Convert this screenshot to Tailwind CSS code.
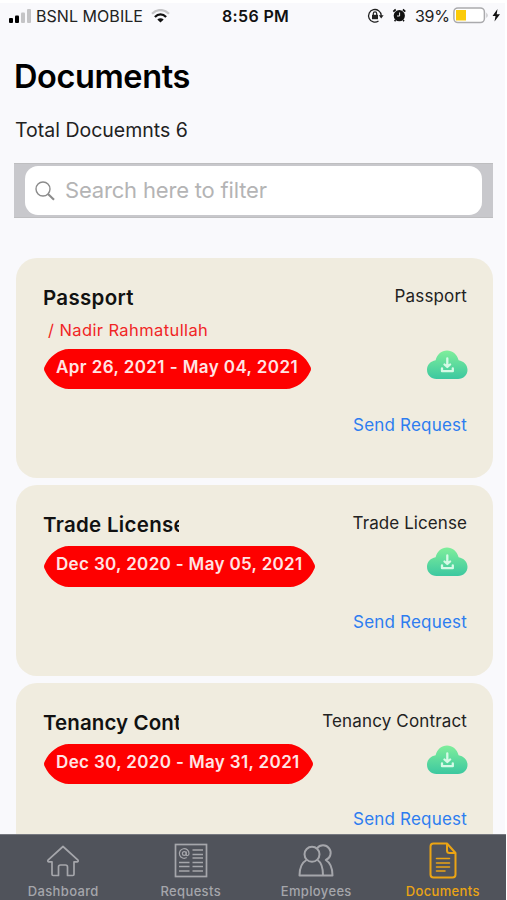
<!DOCTYPE html>
<html lang="en">
<head>
<meta charset="utf-8">
<title>Documents</title>
<script src="https://cdn.jsdelivr.net/npm/@tailwindcss/browser@4"></script>
</head>
<body class="w-[507px] h-[900px] overflow-hidden bg-white font-['Inter','Liberation_Sans',sans-serif] text-black">
<svg class="absolute w-0 h-0" aria-hidden="true">
  <defs>
    <linearGradient id="cg" x1="0" y1="0" x2="0" y2="1"><stop offset="0" stop-color="#7fee9b"/><stop offset="1" stop-color="#3cc8a0"/></linearGradient>
    <symbol id="cloud" viewBox="0 0 42 30">
      <path fill="url(#cg)" d="M10.500 29C5 29 1 25 1 19.800c0-5 3.600-8.800 8.600-9.600C11.300 4 15.500 .5 21 .5s9.900 3.500 11.600 9.700c5 .8 8.900 4.600 8.900 9.600 0 5.200-4 9.200-9.500 9.200z"/>
      <path fill="none" stroke="#d6fae6" stroke-width="2.300" stroke-linecap="round" stroke-linejoin="round" d="M21.300 8.500v7.500M18.500 14.500l2.800 2.500 2.800-2.500M16 18.300v2.900h10.800v-2.900"/>
    </symbol>
  </defs>
</svg>
<div class="mt-[3px] w-[505px] h-[897px] bg-[#f9f9fc] flex flex-col">
  <header class="h-[26px] flex items-center relative text-[16px] leading-[26px] whitespace-nowrap text-[#222]">
    <svg class="ml-[8px] w-[24px] h-[14px] shrink-0" viewBox="0 0 24 14"><rect x="1" y="9" width="4" height="5" rx="1" fill="#000"/><rect x="7" y="6.500" width="4" height="7.500" rx="1" fill="#000"/><rect x="13" y="3.500" width="4" height="10.500" rx="1" fill="#c4c4c6"/><rect x="19" y="0" width="4" height="14" rx="1" fill="#c4c4c6"/></svg>
    <span class="ml-[4px] w-[115px] tracking-[0.05px]">BSNL MOBILE</span>
    <svg class="w-[19px] h-[14px] shrink-0" viewBox="0 0 19 14" fill="none" stroke-width="2.300"><path stroke="#c4c4c6" d="M1 4.800C6-.2 13-.2 18 4.800"/><path stroke="#111" d="M3.900 8c3.400-3.400 7.800-3.400 11.200 0"/><path fill="#111" d="M9.500 13.500L6.300 10.400c1.900-1.600 4.500-1.600 6.400 0z"/></svg>
    <span class="absolute left-[222px] font-semibold text-[#111] tracking-[0.35px]">8:56 PM</span>
    <svg class="absolute left-[367px] top-[5px] w-[17px] h-[16px]" viewBox="0 0 17 16" fill="none" stroke="#222" stroke-width="1.300"><path d="M14.200 8.500V7.500A6.300 6.300 0 1 0 11.500 13"/><path d="M11.800 7.300h4.800l-2.400 3.200z" fill="#222" stroke="none"/><rect x="5" y="6.800" width="6" height="4.400" fill="#222" stroke="none"/><path d="M6.300 7V5.500a1.700 1.700 0 0 1 3.400 0V7" stroke-width="1.200"/></svg>
    <svg class="absolute left-[392px] top-[5px] w-[15px] h-[15px]" viewBox="0 0 15 15"><circle cx="7.300" cy="7.700" r="5.600" fill="#111"/><path d="M1.300 3.700L3.700 1.500M13.300 3.700L10.900 1.500" stroke="#111" stroke-width="1.700"/><path d="M3.500 12L2.600 13.300M11.100 12l.9 1.300" stroke="#111" stroke-width="1.500"/><path d="M7.600 4.500V8H5" stroke="#eee" stroke-width="1" fill="none"/></svg>
    <span class="absolute left-[415px] tracking-[-0.3px]">39%</span>
    <svg class="absolute left-[453px] top-[4px] w-[48px] h-[17px]" viewBox="0 0 48 17"><rect x=".9" y=".9" width="30.500" height="14.700" rx="4" fill="#fff" stroke="#aaaaad" stroke-width="1.500"/><rect x="3" y="3" width="10" height="10.500" fill="#fbcb09"/><path d="M33.500 5.500q2 3 0 5.500z" fill="#aaaaad"/><path d="M44.500 2L39.500 9h3l-1 5.500 5.500-7.300h-3.300z" fill="#111"/></svg>
  </header>
  <h1 class="mt-[28px] ml-[14px] h-[40px] text-[32.500px] leading-[40px] font-semibold whitespace-nowrap tracking-[-0.4px]">Documents</h1>
  <p class="mt-[21px] ml-[15px] h-[24px] text-[19.500px] leading-[24px] text-[#222] whitespace-nowrap">Total Docuemnts 6</p>
  <div class="mt-[21px] ml-[14px] w-[479px] h-[55px] bg-[#c8c8cc] border-y border-[#bebec0] px-[11px] py-[2px] shrink-0">
    <div class="h-[49px] w-[457px] bg-white rounded-[13px] flex items-center">
      <svg class="ml-[10px] w-[20px] h-[20px]" viewBox="0 0 20 20" fill="none" stroke="#8b8b8b"><circle cx="8" cy="8" r="7" stroke-width="1.400"/><path d="M13 13l6 5.800" stroke-width="2.100"/></svg>
      <span class="ml-[10px] text-[22px] text-[#b4b4b5] whitespace-nowrap tracking-[-0.18px]">Search here to filter</span>
    </div>
  </div>
  <main class="mt-[40px] ml-[16px] w-[477px] h-[577px] overflow-hidden flex flex-col gap-[7px] flex-1 min-h-0">
    <article class="h-[220px] shrink-0 rounded-[21px] bg-[#f0ecdf] pt-[27px] pl-[27px] pr-[26px] flex justify-between whitespace-nowrap">
      <div class="flex flex-col items-start">
        <h2 class="h-[25px] w-[137px] overflow-hidden text-[20.500px] leading-[25px] font-semibold text-[#111] tracking-[0.3px]">Passport</h2>
        <p class="mt-[9px] ml-[5px] h-[22px] text-[16.500px] leading-[22px] text-[#f02525] tracking-[0.4px]">/ Nadir Rahmatullah</p>
        <div class="relative mt-[8px] ml-px h-[40px] w-[267px] pl-[12px] text-[17px] leading-[36px] font-semibold text-[#ffe4e4] tracking-[0.42px]"><svg class="absolute inset-0 w-full h-full" viewBox="0 0 267 40" fill="#fe0000"><path d="M25 0H242C252 0 262 8 266 17Q268 20 266 23C262 32 252 40 242 40H25C15 40 5 32 1 23Q-1 20 1 17C5 8 15 0 25 0Z"/></svg><span class="relative">Apr 26, 2021 - May 04, 2021</span></div>
      </div>
      <div class="flex flex-col items-end">
        <span class="h-[22px] text-[17px] leading-[22px] text-[#222] tracking-[0.15px]">Passport</span>
        <svg class="mt-[43px] w-[42px] h-[30px] -mr-px"><use href="#cloud"/></svg>
        <a class="mt-[34px] h-[22px] text-[17px] leading-[22px] text-[#2d7df0] tracking-[0.2px]">Send Request</a>
      </div>
    </article>
    <article class="h-[191px] shrink-0 rounded-[21px] bg-[#f0ecdf] pt-[27px] pl-[27px] pr-[26px] flex justify-between whitespace-nowrap">
      <div class="flex flex-col items-start">
        <h2 class="h-[25px] w-[136px] overflow-hidden text-[20.500px] leading-[25px] font-semibold text-[#111] tracking-[0.3px]">Trade License</h2>
        <div class="relative mt-[9px] ml-px h-[41px] w-[271px] pl-[12px] text-[17px] leading-[36px] font-semibold text-[#ffe4e4] tracking-[0.34px]"><svg class="absolute inset-0 w-full h-full" viewBox="0 0 271 41" fill="#fe0000"><path d="M25 0H246C256 0 266 8 270 17.500Q272 20.500 270 23.500C266 33 256 41 246 41H25C15 41 5 33 1 23.500Q-1 20.500 1 17.500C5 8 15 0 25 0Z"/></svg><span class="relative">Dec 30, 2020 - May 05, 2021</span></div>
      </div>
      <div class="flex flex-col items-end">
        <span class="h-[22px] text-[17px] leading-[22px] text-[#222] tracking-[0.08px]">Trade License</span>
        <svg class="mt-[13px] w-[42px] h-[30px] -mr-px"><use href="#cloud"/></svg>
        <a class="mt-[34px] h-[22px] text-[17px] leading-[22px] text-[#2d7df0] tracking-[0.2px]">Send Request</a>
      </div>
    </article>
    <article class="h-[191px] shrink-0 rounded-[21px] bg-[#f0ecdf] pt-[27px] pl-[27px] pr-[26px] flex justify-between whitespace-nowrap">
      <div class="flex flex-col items-start">
        <h2 class="h-[25px] w-[136px] overflow-hidden text-[20.500px] leading-[25px] font-semibold text-[#111] tracking-[0.1px]">Tenancy Contract</h2>
        <div class="relative mt-[9px] ml-px h-[40px] w-[269px] pl-[12px] text-[17px] leading-[36px] font-semibold text-[#ffe4e4] tracking-[0.36px]"><svg class="absolute inset-0 w-full h-full" viewBox="0 0 269 40" fill="#fe0000"><path d="M25 0H244C254 0 264 8 268 17Q270 20 268 23C264 32 254 40 244 40H25C15 40 5 32 1 23Q-1 20 1 17C5 8 15 0 25 0Z"/></svg><span class="relative">Dec 30, 2020 - May 31, 2021</span></div>
      </div>
      <div class="flex flex-col items-end">
        <span class="h-[22px] text-[17px] leading-[22px] text-[#222] tracking-[0.15px]">Tenancy Contract</span>
        <svg class="mt-[13px] w-[42px] h-[30px] -mr-px"><use href="#cloud"/></svg>
        <a class="mt-[33px] h-[22px] text-[17px] leading-[22px] text-[#2d7df0] tracking-[0.2px]">Send Request</a>
      </div>
    </article>
  </main>
  <nav class="w-[506px] h-[66px] shrink-0 bg-[#50535b] border-t border-[#777980] grid grid-cols-4 text-[13px] leading-[16px] font-medium text-[#a5a6ab] whitespace-nowrap tracking-[0.35px]">
    <div class="flex flex-col items-center">
      <svg class="mt-[9px] w-[34px] h-[34px]" viewBox="0 0 34 34" fill="none" stroke="currentColor" stroke-width="1.700" stroke-linejoin="round"><path d="M17 2.500L2 16.200c-.6.800 0 1.600.9 1.600H6v12.500q0 1.200 1.200 1.200h5.300V23q0-2 2-2h5q2 0 2 2v8.500h5.300q1.200 0 1.200-1.200V17.800h3.100c.9 0 1.500-.8.900-1.600z"/></svg>
      <span class="mt-[5px]">Dashboard</span>
    </div>
    <div class="flex flex-col items-center pl-[2px]">
      <svg class="mt-[8px] w-[34px] h-[35px]" viewBox="0 0 34 35" fill="none" stroke="currentColor" stroke-width="1.700"><rect x="1.500" y="1.500" width="31" height="32"/><path d="M18.500 7h10.500M18.500 11.500h10.500M18.500 15h10.500M5 19.500h10.500M18.500 19.500h10.500M5 23.500h10.500M18.500 23.500h10.500M5 28h10.500M18.500 28h10.500"/><circle cx="10.300" cy="10.500" r="1.900" stroke-width="1.200"/><path stroke-width="1.200" d="M12.200 8.500v3c0 1.700 2.800 1.300 2.800-1A4.800 4.800 0 1 0 12.700 14.600"/></svg>
      <span class="mt-[5px]">Requests</span>
    </div>
    <div class="flex flex-col items-center">
      <svg class="mt-[9px] w-[36px] h-[34px]" viewBox="0 0 36 34" fill="none" stroke="currentColor" stroke-width="2" stroke-linejoin="round"><circle cx="14" cy="10.300" r="7.500"/><path d="M8.500 16C4 18.500 1.500 24 1.500 31.500h33C34.500 24 32 18.500 27.800 16A7.600 7.600 0 1 0 19 4.300M19.500 16C23.500 18.500 25 24 25 31.500"/></svg>
      <span class="mt-[5px]">Employees</span>
    </div>
    <div class="flex flex-col items-center text-[#eba414]">
      <svg class="mt-[7px] w-[30px] h-[37px]" viewBox="0 0 30 37" fill="none" stroke="currentColor" stroke-width="2" stroke-linejoin="round" stroke-linecap="round"><path d="M19 1.500H5.500q-3 0-3 3v28q0 3 3 3h19q3 0 3-3V11zM19 1.500v7q0 2.500 2.500 2.500h6"/><path d="M8.500 16.500h13M8.500 21h13M8.500 25h13M8.500 29h8.500" stroke-width="1.600"/></svg>
      <span class="mt-[4px]">Documents</span>
    </div>
  </nav>
</div>
</body>
</html>
